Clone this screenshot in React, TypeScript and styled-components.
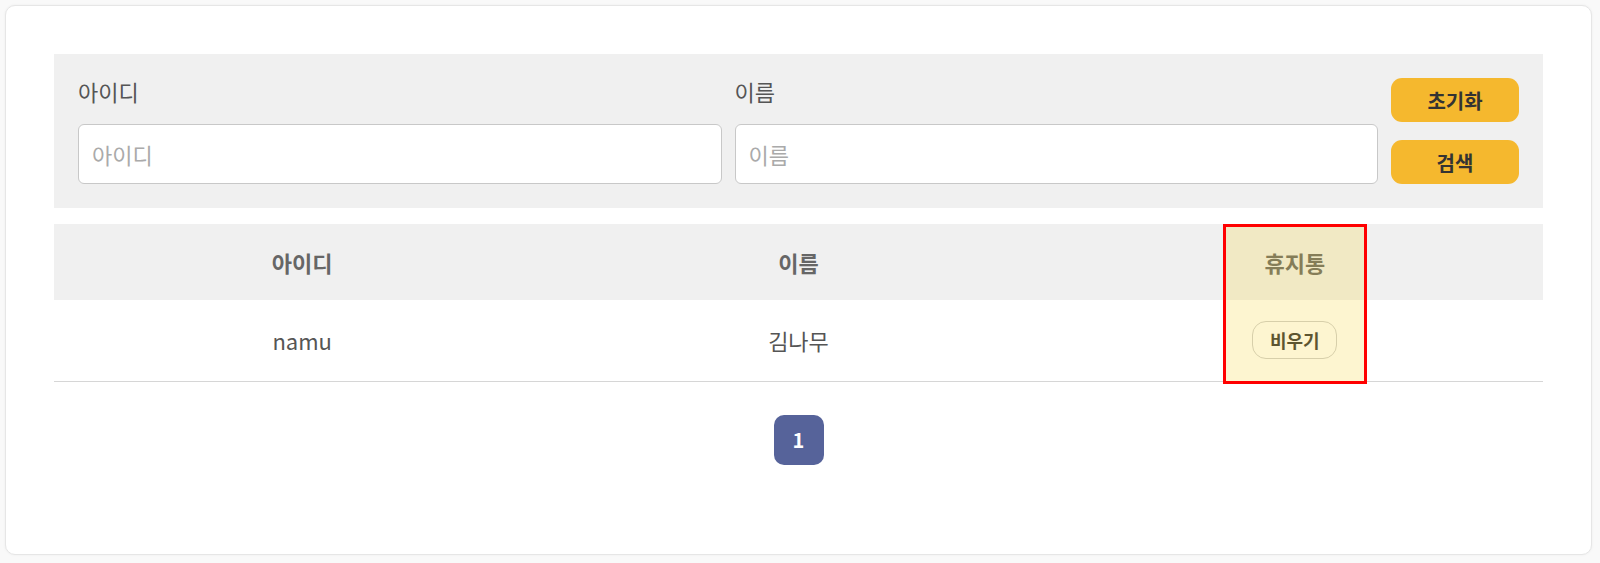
import React from "react";
import styled, { createGlobalStyle } from "styled-components";

const GlobalStyle = createGlobalStyle`
  html, body {
    margin: 0;
    padding: 0;
    background: #f9f9f9;
    font-family: "Noto Sans CJK KR", "Noto Sans", sans-serif;
    color: #555;
  }
  * {
    box-sizing: border-box;
  }
`;

const Page = styled.div`
  width: 1600px;
  height: 563px;
  padding: 5px 8px 8px 5px;
`;

const Card = styled.section`
  height: 100%;
  background: #fff;
  border: 1px solid #e6e6e6;
  border-radius: 10px;
  box-shadow: 0 0 3px rgba(0, 0, 0, 0.05);
  padding: 48px;
`;

const SearchPanel = styled.div`
  display: flex;
  align-items: flex-end;
  gap: 13px;
  padding: 24px;
  background: #f0f0f0;
`;

const Field = styled.label`
  flex: 1;
  display: flex;
  flex-direction: column;
  gap: 20px;

  & span {
    font-size: 22px;
    line-height: 26px;
    color: #555;
  }
`;

const TextInput = styled.input`
  height: 60px;
  padding: 0 13px;
  border: 1px solid #c8c8c8;
  border-radius: 6px;
  background: #fff;
  font-family: inherit;
  font-size: 22px;
  color: #333;
  outline: none;

  &::placeholder {
    color: #aaa;
  }
`;

const ButtonColumn = styled.div`
  display: flex;
  flex-direction: column;
  gap: 18px;
`;

const YellowButton = styled.button`
  width: 128px;
  height: 44px;
  border: none;
  border-radius: 11px;
  background: #f5b82e;
  color: #333;
  font-family: inherit;
  font-size: 20px;
  font-weight: 700;
  cursor: pointer;
`;

const TableWrap = styled.div`
  position: relative;
  margin-top: 16px;
`;

const Table = styled.table`
  width: 100%;
  table-layout: fixed;
  border-collapse: collapse;

  & th {
    height: 76px;
    background: #f0f0f0;
    font-size: 22px;
    font-weight: 700;
    color: #666;
  }
  & td {
    height: 81px;
    font-size: 22px;
    color: #555;
    text-align: center;
    border-bottom: 1px solid #d6d6d6;
  }
`;

const EmptyButton = styled.button`
  width: 85px;
  height: 38px;
  border: 1px solid #cfcfcf;
  border-radius: 14px;
  background: #fff;
  color: #333;
  font-family: inherit;
  font-size: 18px;
  font-weight: 700;
  cursor: pointer;
`;

const Highlight = styled.div`
  position: absolute;
  top: 0;
  bottom: -2px;
  left: calc(83.333% - 72px);
  width: 144px;
  border: 3px solid #ff0000;
  background: rgba(246, 210, 41, 0.22);
  pointer-events: none;
`;

const Pagination = styled.nav`
  display: flex;
  justify-content: center;
  margin-top: 33px;
`;

interface pageProps {
  active: boolean;
}

const PageButton = styled.button<pageProps>`
  width: 50px;
  height: 50px;
  border: none;
  border-radius: 10px;
  background: ${({ active }) => (active ? "#56639a" : "#fff")};
  color: ${({ active }) => (active ? "#fff" : "#555")};
  font-family: inherit;
  font-size: 20px;
  font-weight: 700;
  cursor: pointer;
`;

const users = [{ id: "namu", name: "김나무" }];

function App() {
  return (
    <>
      <GlobalStyle />
      <Page>
        <Card>
          <SearchPanel>
            <Field>
              <span>아이디</span>
              <TextInput placeholder="아이디" />
            </Field>
            <Field>
              <span>이름</span>
              <TextInput placeholder="이름" />
            </Field>
            <ButtonColumn>
              <YellowButton>초기화</YellowButton>
              <YellowButton>검색</YellowButton>
            </ButtonColumn>
          </SearchPanel>

          <TableWrap>
            <Table>
              <thead>
                <tr>
                  <th>아이디</th>
                  <th>이름</th>
                  <th>휴지통</th>
                </tr>
              </thead>
              <tbody>
                {users.map((u) => (
                  <tr key={u.id}>
                    <td>{u.id}</td>
                    <td>{u.name}</td>
                    <td>
                      <EmptyButton>비우기</EmptyButton>
                    </td>
                  </tr>
                ))}
              </tbody>
            </Table>
            <Highlight />
          </TableWrap>

          <Pagination>
            <PageButton active>1</PageButton>
          </Pagination>
        </Card>
      </Page>
    </>
  );
}

export default App;
